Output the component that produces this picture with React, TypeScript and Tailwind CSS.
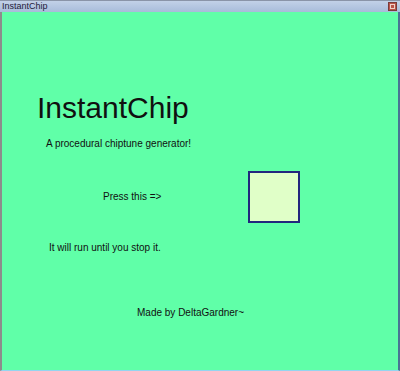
import React from "react";

export default function App() {
  return (
    <div
      className="w-[400px] h-[371px] flex flex-col overflow-hidden bg-[#60ffa8]"
      style={{ fontFamily: '"Liberation Sans", Arial, sans-serif' }}
    >
      <div className="h-[12px] flex items-center justify-between bg-gradient-to-b from-[#c2d1e8] to-[#a8bcda] border-t border-[#8a94a8] pl-[2px] pr-[3px]">
        <span className="text-[9px] leading-[11px] text-[#241a3a]">InstantChip</span>
        <div className="w-[9px] h-[9px] bg-[#b8544a] border border-[#7a3a3a] flex items-center justify-center">
          <div className="w-[5px] h-[5px] border border-[#f0d0c8]" />
        </div>
      </div>
      <div className="flex-1 flex flex-col border-l-2 border-l-[#8c8c8c] border-r-2 border-r-[#4a7494] border-b border-b-[#94d4f0] text-[#101010]">
        <div className="mt-[81px] ml-[35px] text-[30px] leading-[30px]">InstantChip</div>
        <div className="mt-[16px] ml-[44px] text-[10px] leading-[10px]">A procedural chiptune generator!</div>
        <div className="mt-[22px] flex items-center">
          <div className="ml-[101px] w-[145px] text-[10px] leading-[10px]">Press this =&gt;</div>
          <button className="w-[52px] h-[52px] bg-[#e0ffc8] border-2 border-[#22267e]" />
        </div>
        <div className="mt-[20px] ml-[47px] text-[10px] leading-[10px]">It will run until you stop it.</div>
        <div className="mt-[55px] ml-[135px] text-[10px] leading-[10px]">Made by DeltaGardner~</div>
      </div>
    </div>
  );
}
